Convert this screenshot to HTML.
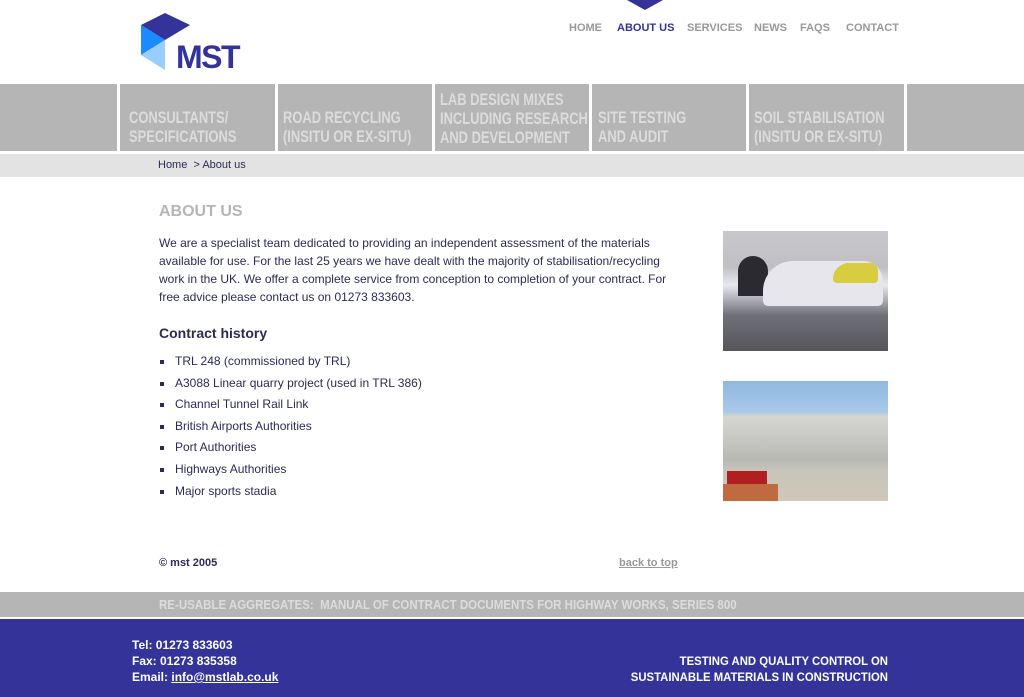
<!DOCTYPE html>
<html><head><meta charset="utf-8"><style>
*{margin:0;padding:0}
body{width:1024px;height:697px;position:relative;background:#fff;font-family:"Liberation Sans",Arial,sans-serif;overflow:hidden}
.a{position:absolute}
.nav{font-size:11px;font-weight:bold;color:#999;top:22px}
.band{top:84px;left:0;width:1024px;height:67px;background:#b5b5b5}
.sep{top:84px;width:3px;height:67px;background:#fff}
.cat{font-weight:bold;font-size:17px;line-height:19px;color:#dcdcdc;white-space:nowrap;transform:scaleX(0.76);transform-origin:0 0}
.t{color:#2b2b55;font-size:12px}
li{list-style:none;position:relative;padding-left:16px;height:21.6px;line-height:18px}
li:before{content:"";position:absolute;left:1px;top:8px;width:4px;height:4px;background:#2b2b55}
.cond{font-weight:bold}
</style></head><body>
<svg class="a" style="left:140px;top:12px" width="52" height="60" viewBox="140 12 52 60">
<polygon points="141,25 165,13 190,25 165,40" fill="#333399"/>
<polygon points="141,25 165,40 141,55" fill="#1a8cff"/>
<polygon points="141,55 165,40 165,70" fill="#99ccff"/>
</svg>
<div class="a" style="left:176px;top:40px;font-size:32px;font-weight:bold;color:#333399;letter-spacing:-1.5px;line-height:34px">MST</div>
<svg class="a" style="left:627px;top:0" width="36" height="11"><polygon points="0,0 36,0 18,10" fill="#333399"/></svg>
<div class="a nav" style="left:569px">HOME</div>
<div class="a nav" style="left:617px;color:#333399">ABOUT US</div>
<div class="a nav" style="left:687px">SERVICES</div>
<div class="a nav" style="left:754px">NEWS</div>
<div class="a nav" style="left:800px">FAQS</div>
<div class="a nav" style="left:846px">CONTACT</div>
<div class="a band"></div>
<div class="a sep" style="left:117px"></div><div class="a sep" style="left:275px"></div><div class="a sep" style="left:432px"></div><div class="a sep" style="left:589px"></div><div class="a sep" style="left:746px"></div><div class="a sep" style="left:904px"></div>
<div class="a cat" style="left:129px;top:108px">CONSULTANTS/<br>SPECIFICATIONS</div>
<div class="a cat" style="left:283px;top:108px">ROAD RECYCLING<br>(INSITU OR EX-SITU)</div>
<div class="a cat" style="left:440px;top:90px">LAB DESIGN MIXES<br>INCLUDING RESEARCH<br>AND DEVELOPMENT</div>
<div class="a cat" style="left:598px;top:108px">SITE TESTING<br>AND AUDIT</div>
<div class="a cat" style="left:754px;top:108px">SOIL STABILISATION<br>(INSITU OR EX-SITU)</div>
<div class="a" style="top:154px;left:0;width:1024px;height:23px;background:#e3e3e3"></div>
<div class="a t" style="left:158px;top:159px;font-size:11px">Home &nbsp;&gt; About us</div>
<div class="a" style="left:159px;top:203px;font-size:16px;font-weight:bold;color:#b5b5b5">ABOUT US</div>
<div class="a t" style="left:159px;top:234px;width:525px;line-height:18px">We are a specialist team dedicated to providing an independent assessment of the materials available for use. For the last 25 years we have dealt with the majority of stabilisation/recycling work in the UK. We offer a complete service from conception to completion of your contract. For free advice please contact us on 01273 833603.</div>
<div class="a" style="left:159px;top:325px;font-size:14px;font-weight:bold;color:#2b2b55">Contract history</div>
<ul class="a t" style="left:159px;top:352px">
<li>TRL 248 (commissioned by TRL)</li><li>A3088 Linear quarry project (used in TRL 386)</li><li>Channel Tunnel Rail Link</li><li>British Airports Authorities</li><li>Port Authorities</li><li>Highways Authorities</li><li>Major sports stadia</li></ul>
<div class="a" style="left:723px;top:231px;width:165px;height:120px;background:linear-gradient(180deg,#c8c8cc 0%,#bfbfc4 30%,#e8e8f0 45%,#707078 70%,#55555a 100%)"><div class="a" style="left:15px;top:25px;width:30px;height:40px;background:#2a2a30;border-radius:15px 15px 0 0"></div><div class="a" style="left:40px;top:30px;width:120px;height:45px;background:#e6e6ec;border-radius:30px 20px 5px 5px"></div><div class="a" style="left:110px;top:32px;width:45px;height:20px;background:#d8cc40;border-radius:20px 10px 5px 5px"></div></div>
<div class="a" style="left:723px;top:381px;width:165px;height:120px;background:linear-gradient(180deg,#8fb8e0 0%,#a8c8e8 25%,#d6d6d2 30%,#b8b8b4 65%,#c8c4bc 75%,#d0c8b8 100%)"><div class="a" style="left:4px;top:90px;width:40px;height:14px;background:#b02020"></div><div class="a" style="left:0;top:103px;width:55px;height:17px;background:#c06a40"></div></div>
<div class="a cond" style="left:159px;top:557px;font-size:11px;color:#2b2b55">© mst 2005</div>
<div class="a cond" style="left:619px;top:557px;font-size:11px;color:#999;text-decoration:underline">back to top</div>
<div class="a" style="top:592px;left:0;width:1024px;height:25px;background:#b5b5b5"></div>
<div class="a cond" style="left:159px;top:597px;font-size:13px;color:#dcdcdc;white-space:nowrap;transform:scaleX(0.885);transform-origin:0 0">RE-USABLE AGGREGATES: &nbsp;MANUAL OF CONTRACT DOCUMENTS FOR HIGHWAY WORKS, SERIES 800</div>
<div class="a" style="top:619px;left:0;width:1024px;height:78px;background:#333399"></div>
<div class="a cond" style="left:132px;top:637px;font-size:12px;line-height:16px;color:#fff">Tel: 01273 833603<br>Fax: 01273 835358<br>Email: <u>info@mstlab.co.uk</u></div>
<div class="a cond" style="left:560px;width:328px;text-align:right;top:653px;font-size:12px;line-height:16px;color:#fff;white-space:nowrap;transform:scaleX(0.945);transform-origin:100% 0">TESTING AND QUALITY CONTROL ON<br>SUSTAINABLE MATERIALS IN CONSTRUCTION</div>
</body></html>
